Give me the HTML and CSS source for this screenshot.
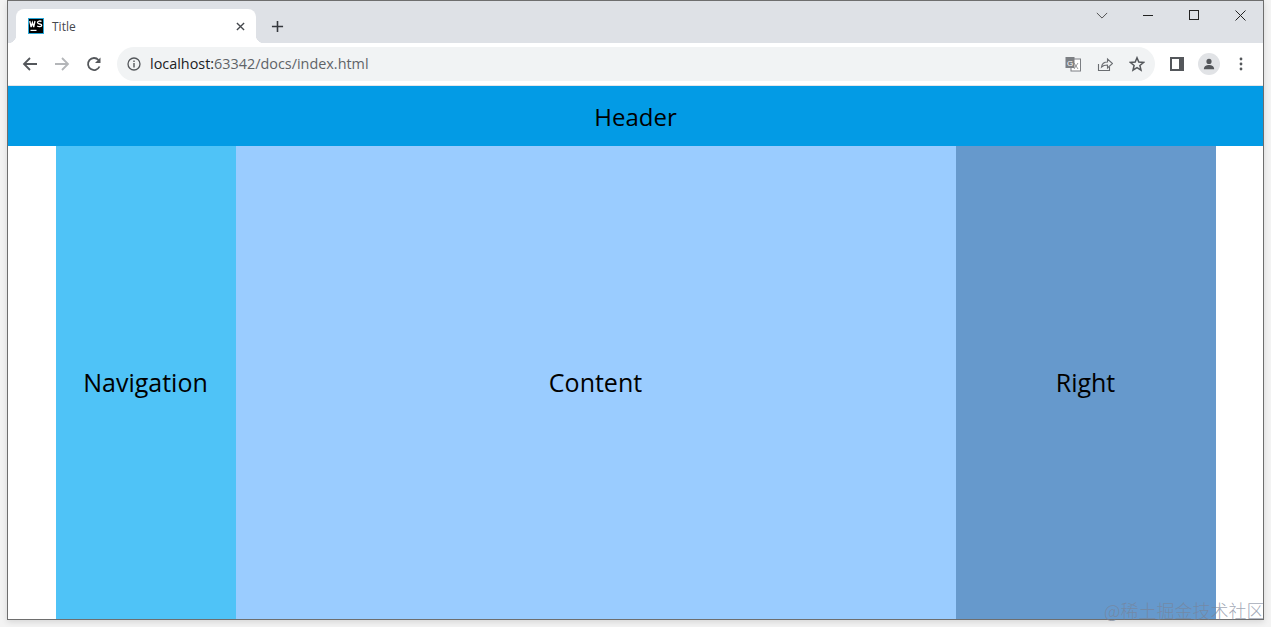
FILE: index.html
```html
<!DOCTYPE html>
<html lang="zh">
<head>
<meta charset="utf-8">
<title>Title</title>
<link rel="stylesheet" href="styles.css">
</head>
<body>
<div class="window">
  <div class="tabstrip">
    <div class="tab">
      <svg class="favicon" viewBox="0 0 16 16"><rect width="16" height="16" fill="#29a8d8"/><rect x="1" y="1" width="14" height="14" fill="#000"/><rect x="2.500" y="11.800" width="6" height="1.200" fill="#fff"/><path d="M1.800 3l1.300 6 1.300-4.500L5.700 9 7 3M13.500 3.600c-1-.9-4-.8-4 .9 0 1.900 4.200 1.100 4.200 2.800 0 1.700-3.300 1.600-4.500.7" fill="none" stroke="#fff" stroke-width="1.300"/></svg>
      <span class="tab-title">Title</span>
      <svg class="tab-close" viewBox="0 0 10 10"><path d="M1 1l8 8M9 1l-8 8" stroke="#45484d" stroke-width="1.500"/></svg>
    </div>
    <svg class="newtab" viewBox="0 0 14 14"><path d="M7 1v12M1 7h12" stroke="#34373c" stroke-width="1.700"/></svg>
    <div class="winctl">
      <svg class="ctl-chev" viewBox="0 0 14 8"><path d="M1 1l6 6 6-6" fill="none" stroke="#3a3a3a"/></svg>
      <svg class="ctl-min" viewBox="0 0 10 1"><rect width="10" height="1" fill="#222"/></svg>
      <svg class="ctl-max" viewBox="0 0 10 10"><rect x=".5" y=".5" width="9" height="9" fill="none" stroke="#222"/></svg>
      <svg class="ctl-close" viewBox="0 0 11 11"><path d="M.5.5l10 10M10.500.5l-10 10" stroke="#222"/></svg>
    </div>
  </div>
  <div class="toolbar">
    <svg class="nav-icon" viewBox="0 0 16 16"><path d="M15 8H2M8 2L2 8l6 6" fill="none" stroke="#54575b" stroke-width="1.800"/></svg>
    <svg class="nav-icon" viewBox="0 0 16 16"><path d="M1 8h13M8 2l6 6-6 6" fill="none" stroke="#b4b6b9" stroke-width="1.800"/></svg>
    <svg class="nav-icon" viewBox="0 0 16 16"><path d="M13.500 10.500A6 6 0 1 1 12.500 4" fill="none" stroke="#54575b" stroke-width="1.800"/><path d="M14.500 1.500v5.500H9z" fill="#54575b"/></svg>
    <div class="omnibox">
      <svg class="info" viewBox="0 0 14 14"><circle cx="7" cy="7" r="6" fill="none" stroke="#54575b" stroke-width="1.300"/><rect x="6.300" y="6" width="1.400" height="4.500" fill="#54575b"/><rect x="6.300" y="3.500" width="1.400" height="1.500" fill="#54575b"/></svg>
      <span class="url"><span class="host">localhost:</span>63342/docs/index.html</span>
      <div class="omni-actions">
        <svg class="omni-icon" viewBox="0 0 16 16"><rect x="6" y="3" width="9.500" height="12" fill="#fff" stroke="#7c7f83"/><rect x=".5" y="1" width="9" height="11" fill="#7c7f83"/><text x="5" y="9.500" class="g-mark">G</text><path d="M9 7l4 6M13 7l-4 6" stroke="#7c7f83" stroke-width=".8"/></svg>
        <svg class="omni-icon" viewBox="0 0 16 16"><path d="M1.500 8v6.500h11V11" fill="none" stroke="#6a6d71" stroke-width="1.100"/><path d="M4.500 11c.5-3.500 3-5 6-5V3l5 4.500-5 4.500V9c-2.500 0-4.500.5-6 2z" fill="none" stroke="#6a6d71" stroke-width="1.100"/></svg>
        <svg class="omni-icon" viewBox="0 0 16 16"><path d="M8 1.800l1.800 4.300 4.700.4-3.600 3 1.100 4.600L8 11.700l-4 2.400 1.100-4.600-3.600-3 4.700-.4z" fill="none" stroke="#54575b" stroke-width="1.500"/></svg>
      </div>
    </div>
    <div class="tool-actions">
      <svg class="side-icon" viewBox="0 0 14 14"><rect width="14" height="14" fill="#54575b"/><rect x="2" y="2" width="7" height="10" fill="#fff"/></svg>
      <div class="avatar"><svg viewBox="0 0 14 14"><circle cx="7" cy="4" r="3" fill="#54575b"/><path d="M1 13c0-3.500 3-4.800 6-4.800s6 1.300 6 4.800z" fill="#54575b"/></svg></div>
      <svg class="menu-icon" viewBox="0 0 4 14"><circle cx="2" cy="2" r="1.400" fill="#54575b"/><circle cx="2" cy="7" r="1.400" fill="#54575b"/><circle cx="2" cy="12" r="1.400" fill="#54575b"/></svg>
    </div>
  </div>
  <div class="page">
    <header class="page-header">Header</header>
    <div class="columns">
      <nav class="col col-nav">Navigation</nav>
      <main class="col col-content">Content</main>
      <aside class="col col-right">Right</aside>
    </div>
  </div>
</div>
<div class="watermark">@稀土掘金技术社区</div>
</body>
</html>
```
FILE: styles.css
```css
* { box-sizing: border-box; }
html, body { margin: 0; height: 627px; overflow: hidden; }
body { background: #f3f3f3; font-family: "Open Sans", "Noto Sans", "Liberation Sans", sans-serif; padding-left: 7px; }
svg { display: block; flex: none; }
.window { width: 1257px; height: 620px; border: 1px solid #6e6e6e; display: flex; flex-direction: column; background: #fff; overflow: hidden; box-shadow: 0 2px 6px rgba(0,0,0,.12); }
.tabstrip { height: 42px; background: #dee1e6; display: flex; align-items: flex-end; flex: none; position: relative; padding-left: 8px; }
.tab { width: 240px; height: 34px; background: #fff; border-radius: 8px 8px 0 0; display: flex; align-items: center; padding: 0 11px 0 12px; position: relative; }
.tab::before, .tab::after { content: ""; position: absolute; bottom: 0; width: 8px; height: 8px; }
.tab::before { left: -8px; background: radial-gradient(circle at 0 0, transparent 8px, #fff 8.500px); }
.tab::after { right: -8px; background: radial-gradient(circle at 100% 0, transparent 8px, #fff 8.500px); }
.favicon { width: 16px; height: 16px; }
.tab-title { font-size: 12px; color: #45484d; margin-left: 8px; flex: 1; }
.tab-close { width: 9px; height: 9px; }
.newtab { width: 13px; height: 13px; margin: 0 0 10px 15px; }
.winctl { position: absolute; top: 0; right: 0; height: 30px; display: flex; align-items: center; }
.ctl-chev { width: 12px; height: 7px; position: absolute; right: 155px; top: 11px; }
.ctl-min { width: 10px; height: 1px; position: absolute; right: 110px; top: 14px; }
.ctl-max { width: 10px; height: 10px; position: absolute; right: 64px; top: 9px; }
.ctl-close { width: 11px; height: 11px; position: absolute; right: 17px; top: 9px; }
.toolbar { height: 43px; flex: none; background: #fff; display: flex; align-items: center; padding: 0 0 1px 14px; border-bottom: 1px solid #e4e6ea; }
.nav-icon { width: 16px; height: 16px; margin-right: 16px; }
.omnibox { width: 1038px; height: 34px; margin-left: -1px; border-radius: 17px; background: #f1f3f4; display: flex; align-items: center; padding: 0 10px; }
.info { width: 14px; height: 14px; }
.url { font-size: 14.4px; margin-left: 9px; color: #5f6368; flex: 1; }
.host { color: #202124; }
.omni-actions { display: flex; gap: 16px; align-items: center; }
.omni-icon { width: 16px; height: 16px; }
.g-mark { font-size: 8px; fill: #fff; text-anchor: middle; font-family: "Liberation Sans", sans-serif; }
.tool-actions { display: flex; align-items: center; margin-left: 15px; }
.side-icon { width: 14px; height: 14px; }
.avatar { width: 22px; height: 22px; border-radius: 50%; background: #e1e3e6; display: flex; align-items: center; justify-content: center; margin-left: 14px; }
.avatar svg { width: 12px; height: 12px; }
.menu-icon { width: 4px; height: 14px; margin-left: 19px; }
.page { flex: 1; display: flex; flex-direction: column; min-height: 0; }
.page-header { height: 60px; flex: none; background: #039be5; display: flex; align-items: center; justify-content: center; font-size: 24px; color: #000; }
.columns { flex: 1; display: flex; justify-content: center; min-height: 0; }
.col { display: flex; align-items: center; justify-content: center; font-size: 25px; color: #000; padding-bottom: 2px; }
.col-nav { width: 180px; background: #4fc3f7; }
.col-content { width: 720px; background: #9accff; }
.col-right { width: 260px; background: #6699cc; }
.watermark { position: absolute; top: 598px; left: 1104px; font-size: 18px; line-height: 24px; font-weight: 300; white-space: nowrap; color: rgba(120,130,150,.7); font-family: "Noto Sans CJK SC", sans-serif; }
```
